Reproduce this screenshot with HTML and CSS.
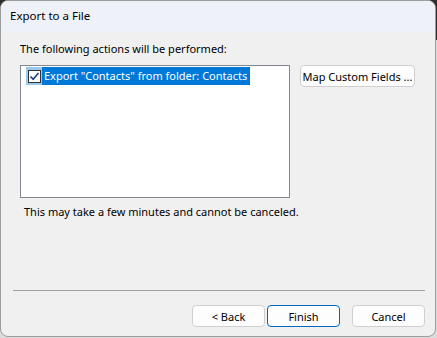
FILE: index.html
```html
<!DOCTYPE html>
<html lang="en">
<head>
    <meta charset="UTF-8">
    <title>Export to a File</title>
    <link rel="stylesheet" href="styles.css">
</head>
<body>
    <div class="window">
        <div class="titlebar">Export to a File</div>
        <div class="content">
            <div class="label">The following actions will be performed:</div>
            <div class="main-row">
                <div class="listbox">
                    <div class="item">
                        <span class="check-cell">
                            <span class="checkbox">
                                <svg width="11" height="11" viewBox="0 0 11 11">
                                    <path d="M1.5 5.5 L4.2 8.3 L9.5 2" fill="none" stroke="#1c3f7a" stroke-width="1.6"/>
                                </svg>
                            </span>
                        </span>
                        <span class="item-text">Export "Contacts" from folder: Contacts</span>
                    </div>
                </div>
                <button class="btn map-btn">Map Custom Fields ...</button>
            </div>
            <div class="note">This may take a few minutes and cannot be canceled.</div>
        </div>
        <div class="footer">
            <div class="separator"></div>
            <div class="buttons">
                <button class="btn">&lt; Back</button>
                <button class="btn default">Finish</button>
                <button class="btn cancel">Cancel</button>
            </div>
        </div>
    </div>
</body>
</html>
```

FILE: styles.css
```css
body {
    margin: 0;
    height: 338px;
    background: linear-gradient(#2e2e2e 0, #2e2e2e 40px, #dcdcdc 40px);
    font-family: "Noto Sans", "Open Sans", sans-serif;
    font-size: 11px;
    color: #000;
}

.window {
    width: 434px;
    height: 335px;
    background: #f0f0f0;
    border: 1px solid #9c9c9c;
    border-radius: 8px;
    overflow: hidden;
    display: flex;
    flex-direction: column;
}

.titlebar {
    height: 31px;
    line-height: 30px;
    padding-left: 9px;
    background: #eef1f7;
    font-size: 11.5px;
    flex-shrink: 0;
}

.content {
    padding: 8px 0 0 19px;
    flex: 1;
}

.label {
    line-height: 18px;
}

.main-row {
    display: flex;
    align-items: flex-start;
    gap: 10px;
    margin-top: 7px;
}

.listbox {
    width: 263px;
    height: 130px;
    background: #fff;
    border: 1px solid #828790;
    padding: 1px 0 0 5px;
}

.item {
    display: flex;
    height: 18px;
    align-items: center;
}

.check-cell {
    width: 16px;
    height: 18px;
    background: #99c9ef;
    display: flex;
    align-items: center;
    justify-content: center;
}

.checkbox {
    width: 11px;
    height: 11px;
    background: #fff;
    border: 1px solid #333;
    display: flex;
}

.item-text {
    background: #0078d7;
    color: #fff;
    height: 18px;
    line-height: 18px;
    padding: 0 3px 0 2px;
}

.btn {
    font-family: inherit;
    font-size: 11px;
    background: #fdfdfd;
    border: 1px solid #d0d0d0;
    border-radius: 4px;
    height: 22px;
    padding: 0;
    color: #000;
    white-space: nowrap;
}

.map-btn {
    width: 115px;
}

.note {
    margin: 6px 0 0 4px;
    line-height: 16px;
}

.footer {
    padding: 0 10px 9px 11px;
}

.separator {
    height: 1px;
    background: #a0a0a0;
    margin: 0 0 14px 1px;
}

.buttons {
    display: flex;
    justify-content: flex-end;
    gap: 2px;
}

.buttons .btn {
    width: 73px;
}

.btn.default {
    border: 1px solid #0067c0;
}

.btn.cancel {
    margin-left: 10px;
}
```
